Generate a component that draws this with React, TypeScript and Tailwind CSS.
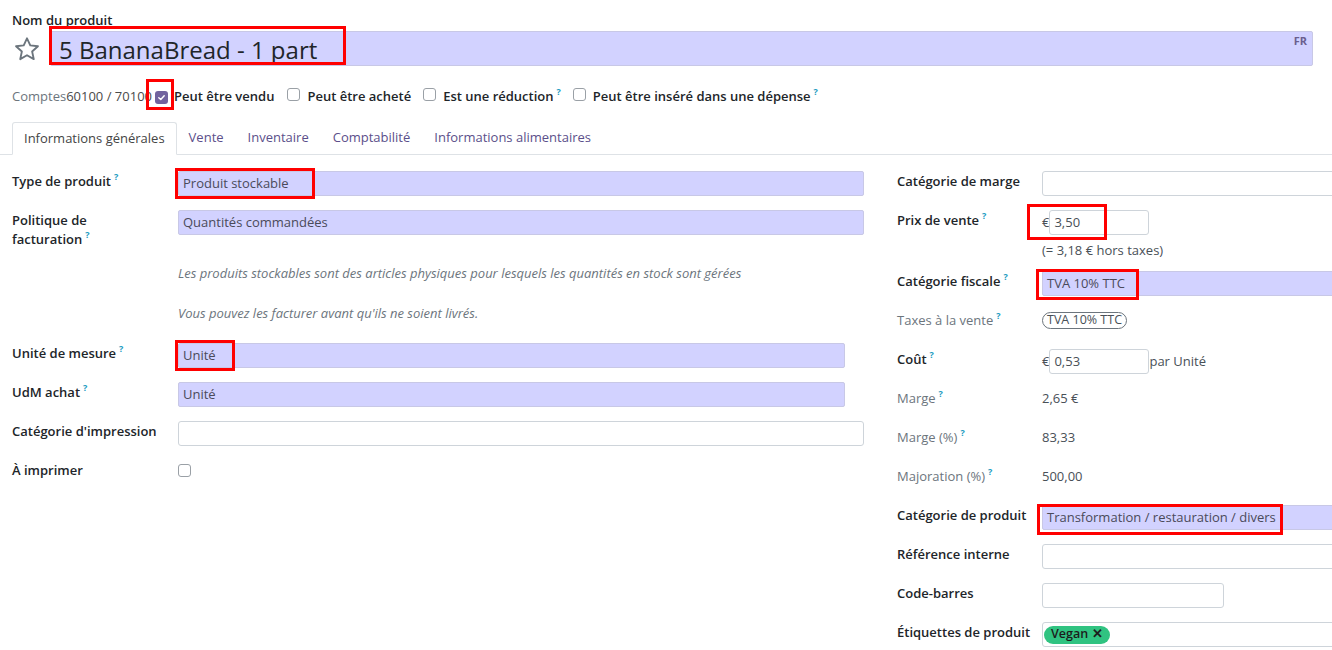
import React from "react";

const Q = () => (
  <span className="relative top-[-6px] ml-[3px] text-[9px] font-bold leading-[0] text-[#1b9bbf]">?</span>
);

const RedBox = ({ className }: { className: string }) => (
  <div className={`pointer-events-none absolute border-[3px] border-[#ff0000] ${className}`} />
);

const Check = ({ checked }: { checked?: boolean }) =>
  checked ? (
    <span className="inline-flex h-[13px] w-[13px] items-center justify-center rounded-[3px] bg-[#71639e]">
      <svg width="9" height="9" viewBox="0 0 10 10" fill="none">
        <path d="M2 5.2 L4.2 7.2 L8 3" stroke="white" strokeWidth="1.6" strokeLinecap="round" strokeLinejoin="round" />
      </svg>
    </span>
  ) : (
    <span className="inline-block h-[13px] w-[13px] rounded-[3px] border border-[#9aa0a6] bg-white" />
  );

const Lav = ({ children, className = "" }: { children?: React.ReactNode; className?: string }) => (
  <div className={`flex h-[25px] items-center rounded-[2px] border border-[#c8c8e6] bg-[#d2d2ff] px-[4px] text-[#4a4a5a] ${className}`}>
    {children}
  </div>
);

const White = ({ className = "" }: { className?: string }) => (
  <div className={`h-[25px] rounded-[3px] border border-[#ced4da] bg-white ${className}`} />
);

function LRow({ label, q, children, gray }: { label: string; q?: boolean; children?: React.ReactNode; gray?: boolean }) {
  return (
    <div className="flex h-[39px] items-start">
      <div className={`w-[166px] shrink-0 pt-[1px] leading-[18px] ${gray ? "text-[#6c757d]" : "font-semibold text-[#212529]"}`}>
        {label}
        {q && <Q />}
      </div>
      <div className="flex-1 min-w-0">{children}</div>
    </div>
  );
}

function RRow({ label, q, children, gray, h = "h-[39px]" }: { label: string; q?: boolean; children?: React.ReactNode; gray?: boolean; h?: string }) {
  return (
    <div className={`flex ${h} items-start`}>
      <div className={`w-[145px] shrink-0 pt-[1px] leading-[18px] ${gray ? "text-[#6c757d]" : "font-semibold text-[#212529]"}`}>
        {label}
        {q && <Q />}
      </div>
      <div className="flex-1 min-w-0">{children}</div>
    </div>
  );
}

export default function App() {
  return (
    <div className="h-[650px] w-[1332px] overflow-hidden bg-white font-['Open_Sans',sans-serif] text-[13px] text-[#212529]">
      {/* Header */}
      <div className="pl-[12px] pt-[11px]">
        <div className="font-semibold leading-[18px]">Nom du produit</div>
        <div className="mt-[2px] flex items-center">
          <svg width="28" height="28" viewBox="0 0 24 24" className="ml-[1px] mr-[9px]" fill="none" stroke="#6c757d" strokeWidth="1.6" strokeLinejoin="round">
            <path d="M12 2.8 L14.8 8.9 L21.4 9.6 L16.4 14.1 L17.8 20.7 L12 17.3 L6.2 20.7 L7.6 14.1 L2.6 9.6 L9.2 8.9 Z" />
          </svg>
          <div className="relative flex h-[35px] w-[1263px] items-start rounded-[2px] border border-[#c8c8e6] bg-[#d2d2ff]">
            <span className="pl-[8px] text-[24px] leading-[35px] text-[#212529]">5 BananaBread - 1 part</span>
            <span className="ml-auto mr-[5px] mt-[1px] text-[11px] font-bold text-[#6b5f8e]">FR</span>
            <RedBox className="left-[-2px] top-[-6px] h-[39px] w-[297px]" />
          </div>
        </div>
        <div className="mt-[21px] flex h-[20px] items-center">
          <span className="text-[#6c757d]">Comptes</span>
          <span className="text-[#4a4a4a]">60100 / 70100</span>
          <span className="relative ml-[3px] flex items-center">
            <Check checked />
            <RedBox className="left-[-9px] top-[-12px] h-[31px] w-[28px]" />
          </span>
          <span className="ml-[6px] font-semibold">Peut être vendu</span>
          <span className="ml-[13px]"><Check /></span>
          <span className="ml-[7px] font-semibold">Peut être acheté</span>
          <span className="ml-[12px]"><Check /></span>
          <span className="ml-[7px] font-semibold">Est une réduction<Q /></span>
          <span className="ml-[12px]"><Check /></span>
          <span className="ml-[7px] font-semibold">Peut être inséré dans une dépense<Q /></span>
        </div>
      </div>

      {/* Tabs */}
      <div className="mt-[15px] flex h-[33px] items-end border-b border-[#dee2e6] pl-[12px]">
        <div className="mb-[-1px] flex h-[33px] items-center rounded-t-[3px] border border-b-white border-[#dee2e6] bg-white px-[11px] text-[#444]">
          Informations générales
        </div>
        {["Vente", "Inventaire", "Comptabilité", "Informations alimentaires"].map((t) => (
          <div key={t} className="flex h-[33px] items-center px-[12px] text-[#5b4f8a]">
            {t}
          </div>
        ))}
      </div>

      {/* Body */}
      <div className="mt-[16px] flex">
        {/* Left */}
        <div className="ml-[12px] w-[852px] shrink-0">
          <LRow label="Type de produit" q>
            <Lav className="relative">
              Produit stockable
              <RedBox className="left-[-4px] top-[-4px] h-[31px] w-[140px]" />
            </Lav>
          </LRow>
          <div className="flex h-[44px] items-start">
            <div className="w-[166px] shrink-0 pt-[1px] font-semibold leading-[19px]">
              Politique de
              <br />
              facturation<Q />
            </div>
            <div className="flex-1">
              <Lav>Quantités commandées</Lav>
            </div>
          </div>
          <div className="pl-[166px] text-[13px] italic text-[#6c757d]">
            <div className="flex h-[40px] items-center">
              Les produits stockables sont des articles physiques pour lesquels les quantités en stock sont gérées
            </div>
            <div className="flex h-[40px] items-center">Vous pouvez les facturer avant qu'ils ne soient livrés.</div>
          </div>
          <div className="h-[9px]" />
          <LRow label="Unité de mesure" q>
            <Lav className="relative w-[667px]">
              Unité
              <RedBox className="left-[-4px] top-[-4px] h-[31px] w-[60px]" />
            </Lav>
          </LRow>
          <LRow label="UdM achat" q>
            <Lav className="w-[667px]">Unité</Lav>
          </LRow>
          <LRow label="Catégorie d'impression">
            <White />
          </LRow>
          <LRow label="À imprimer">
            <div className="pt-[3px]">
              <Check />
            </div>
          </LRow>
        </div>

        {/* Right */}
        <div className="ml-[33px] flex-1 min-w-0">
          <RRow label="Catégorie de marge">
            <White className="w-[300px]" />
          </RRow>
          <RRow label="Prix de vente" q h="h-[61px]">
            <div className="flex items-center">
              <span className="relative flex items-center">
                <span className="text-[#495057]">€</span>
                <div className="flex h-[25px] w-[100px] items-center rounded-[3px] border border-[#ced4da] bg-white pl-[4px] text-[#495057]">3,50</div>
                <RedBox className="left-[-15px] top-[-6px] h-[36px] w-[80px]" />
              </span>
            </div>
            <div className="mt-[5px] leading-[20px] text-[#495057]">(= 3,18 € hors taxes)</div>
          </RRow>
          <RRow label="Catégorie fiscale" q>
            <Lav className="relative w-[300px]">
              TVA 10% TTC
              <RedBox className="left-[-7px] top-[-3px] h-[31px] w-[103px]" />
            </Lav>
          </RRow>
          <RRow label="Taxes à la vente" q gray>
            <span className="mt-[2px] inline-flex h-[17px] items-center rounded-full border border-[#6c757d] px-[4px] text-[12.5px] text-[#495057]">
              TVA 10% TTC
            </span>
          </RRow>
          <RRow label="Coût" q>
            <div className="flex items-center">
              <span className="text-[#495057]">€</span>
              <div className="flex h-[25px] w-[100px] items-center rounded-[3px] border border-[#ced4da] bg-white pl-[4px] text-[#495057]">0,53</div>
              <span className="text-[#495057]">par Unité</span>
            </div>
          </RRow>
          <RRow label="Marge" q gray>
            <div className="pt-[1px] text-[#495057]">2,65 €</div>
          </RRow>
          <RRow label="Marge (%)" q gray>
            <div className="pt-[1px] text-[#495057]">83,33</div>
          </RRow>
          <RRow label="Majoration (%)" q gray>
            <div className="pt-[1px] text-[#495057]">500,00</div>
          </RRow>
          <RRow label="Catégorie de produit">
            <Lav className="relative w-[300px]">
              Transformation / restauration / divers
              <RedBox className="left-[-6px] top-[-2px] h-[31px] w-[246px]" />
            </Lav>
          </RRow>
          <RRow label="Référence interne">
            <White className="w-[300px]" />
          </RRow>
          <RRow label="Code-barres">
            <White className="w-[182px]" />
          </RRow>
          <RRow label="Étiquettes de produit">
            <div className="flex h-[25px] w-[300px] items-center rounded-[3px] border border-[#ced4da] bg-white pl-[1px]">
              <span className="inline-flex h-[18px] items-center rounded-full bg-[#30c381] px-[7px] text-[12.5px] font-semibold text-[#1c1c1c]">
                Vegan <span className="ml-[4px]">✕</span>
              </span>
            </div>
          </RRow>
        </div>
      </div>
    </div>
  );
}
